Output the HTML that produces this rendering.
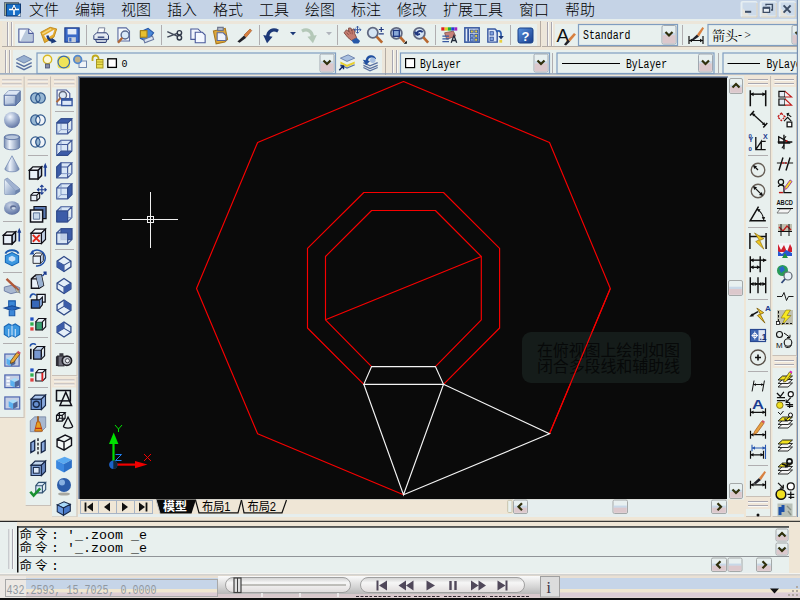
<!DOCTYPE html>
<html lang="zh"><head><meta charset="utf-8"><title>AutoCAD</title>
<style>
html,body{margin:0;padding:0;background:#efe6d6;overflow:hidden}
svg{display:block}
.cj{font-family:"Liberation Sans","Noto Sans CJK SC",sans-serif}
.mn{font-family:"Liberation Sans","Noto Sans CJK SC",sans-serif;font-weight:300}
.se{font-family:"Liberation Serif","Noto Serif CJK SC",serif}
.mo{font-family:"Liberation Mono","Noto Sans CJK SC",monospace}
.sa{font-family:"Liberation Sans","Noto Sans CJK SC",sans-serif}
</style></head><body>
<svg width="800" height="600" viewBox="0 0 800 600">
<rect x="0" y="0" width="800" height="600" fill="#efe6d6" />
<rect x="0" y="0" width="800" height="19" fill="#c5d3e6" />
<rect x="0" y="19" width="800" height="2" fill="#e6eeee" />
<text x="29" y="15" font-size="15" fill="#000" class="mn" textLength="30">文件</text>
<text x="75" y="15" font-size="15" fill="#000" class="mn" textLength="30">编辑</text>
<text x="121" y="15" font-size="15" fill="#000" class="mn" textLength="30">视图</text>
<text x="167" y="15" font-size="15" fill="#000" class="mn" textLength="30">插入</text>
<text x="213" y="15" font-size="15" fill="#000" class="mn" textLength="30">格式</text>
<text x="259" y="15" font-size="15" fill="#000" class="mn" textLength="30">工具</text>
<text x="305" y="15" font-size="15" fill="#000" class="mn" textLength="30">绘图</text>
<text x="351" y="15" font-size="15" fill="#000" class="mn" textLength="30">标注</text>
<text x="397" y="15" font-size="15" fill="#000" class="mn" textLength="30">修改</text>
<text x="443" y="15" font-size="15" fill="#000" class="mn" textLength="60">扩展工具</text>
<text x="519" y="15" font-size="15" fill="#000" class="mn" textLength="30">窗口</text>
<text x="565" y="15" font-size="15" fill="#000" class="mn" textLength="30">帮助</text>
<rect x="2" y="21" width="539" height="26" fill="#ece6da" />
<rect x="15" y="24" width="522" height="22" fill="#e8f0ee" />
<line x1="7.5" y1="22" x2="7.5" y2="46" stroke="#a8a6b0" stroke-width="1" />
<line x1="8.5" y1="22" x2="8.5" y2="46" stroke="#f8f8f4" stroke-width="1" />
<line x1="11.5" y1="22" x2="11.5" y2="46" stroke="#a8a6b0" stroke-width="1" />
<line x1="12.5" y1="22" x2="12.5" y2="46" stroke="#f8f8f4" stroke-width="1" />
<line x1="2" y1="46.5" x2="541" y2="46.5" stroke="#b4aca4" stroke-width="1" />
<line x1="540.5" y1="21" x2="540.5" y2="47" stroke="#b4aca4" stroke-width="1" />
<rect x="542" y="21" width="258" height="26" fill="#ece6da" />
<rect x="555" y="24" width="245" height="22" fill="#e8f0ee" />
<line x1="547.5" y1="22" x2="547.5" y2="46" stroke="#a8a6b0" stroke-width="1" />
<line x1="548.5" y1="22" x2="548.5" y2="46" stroke="#f8f8f4" stroke-width="1" />
<line x1="551.5" y1="22" x2="551.5" y2="46" stroke="#a8a6b0" stroke-width="1" />
<line x1="552.5" y1="22" x2="552.5" y2="46" stroke="#f8f8f4" stroke-width="1" />
<line x1="542" y1="46.5" x2="800" y2="46.5" stroke="#b4aca4" stroke-width="1" />
<rect x="0" y="49" width="385" height="25" fill="#ece6da" />
<rect x="13" y="50" width="369" height="23" fill="#e8f0ee" />
<line x1="5.5" y1="50" x2="5.5" y2="73" stroke="#a8a6b0" stroke-width="1" />
<line x1="6.5" y1="50" x2="6.5" y2="73" stroke="#f8f8f4" stroke-width="1" />
<line x1="9.5" y1="50" x2="9.5" y2="73" stroke="#a8a6b0" stroke-width="1" />
<line x1="10.5" y1="50" x2="10.5" y2="73" stroke="#f8f8f4" stroke-width="1" />
<line x1="385.5" y1="48" x2="385.5" y2="75" stroke="#b4aca4" stroke-width="1" />
<rect x="387" y="49" width="413" height="25" fill="#ece6da" />
<rect x="399" y="50" width="401" height="23" fill="#e8f0ee" />
<line x1="392.5" y1="50" x2="392.5" y2="73" stroke="#a8a6b0" stroke-width="1" />
<line x1="393.5" y1="50" x2="393.5" y2="73" stroke="#f8f8f4" stroke-width="1" />
<line x1="396.5" y1="50" x2="396.5" y2="73" stroke="#a8a6b0" stroke-width="1" />
<line x1="397.5" y1="50" x2="397.5" y2="73" stroke="#f8f8f4" stroke-width="1" />
<rect x="0" y="73.3" width="800" height="1.2" fill="#8098b8" />
<g transform="translate(17.20,26.20) scale(1.100)"><path d="M1.5 2.5 H10.5 L14.5 6.5 V14.5 H1.5 Z" fill="#f4f8fc" stroke="#4a5a9a"/><path d="M3 13.5 L8 3.5 H10.5 L13.5 7 V13.5 Z" fill="#b8c8dc"/><path d="M10.5 2.5 V6.5 H14.5" fill="#fff" stroke="#4a5a9a"/></g>
<g transform="translate(40.20,26.20) scale(1.100)"><path d="M.5 5.5 L9 1 L15 2.5 L12.5 10 L4 15 Z" fill="#e4ac30" stroke="#c08818" stroke-width=".8"/><path d="M3.5 8.5 L13 3 L11.5 7.5 L5.5 11.5Z" fill="#eef2f8"/><path d="M2 7 L10 2.5" stroke="#f4d880" stroke-width="1.2"/><path d="M6.5 8.5 Q7.5 13.5 13 13.5" fill="none" stroke="#1a3a7a" stroke-width="2.2"/><path d="M10.5 10.5 L15 14 L10 15.8Z" fill="#1a3a7a"/></g>
<g transform="translate(63.20,26.20) scale(1.100)"><rect x="1.5" y="1.5" width="13" height="13" fill="#3a6ac8" stroke="#203c88"/><rect x="4" y="2.5" width="8" height="5" fill="#e4ecf8"/><rect x="4.5" y="10" width="7" height="4.5" fill="#c8d0dc"/><rect x="5.5" y="10.5" width="2" height="3.5" fill="#3a6ac8"/></g>
<line x1="86.5" y1="25" x2="86.5" y2="45" stroke="#b0aeb0" stroke-width="1" />
<g transform="translate(92.20,26.20) scale(1.100)"><path d="M4.5 7 L6 1.5 H11.5 L10.5 7" fill="#fcfcfc" stroke="#6a7490" stroke-width=".8"/><path d="M1.5 8.5 L4 6 H13 L14.8 8.5 V12 H1.5Z" fill="#e4eaf2" stroke="#2c3c74" stroke-width=".9"/><path d="M3 12 H13.5 L12.5 14.8 H4Z" fill="#c8d0de" stroke="#2c3c74" stroke-width=".9"/><path d="M5 10 H11" stroke="#2c3c74" stroke-width="1.2"/></g>
<g transform="translate(115.20,26.20) scale(1.100)"><path d="M2.5 1.5 H10 L13 4.5 V13.5 H2.5 Z" fill="#f4f8fc" stroke="#5a6aa0"/><circle cx="9" cy="8" r="3.6" fill="#d8e8f8" stroke="#5a6a90" stroke-width="1.3"/><path d="M6.5 10.5 L2.5 15" stroke="#b06838" stroke-width="2.2"/></g>
<g transform="translate(138.20,26.20) scale(1.100)"><path d="M2 5 L9 2 L14 6 L8 14 L2 11Z" fill="#4888d8" stroke="#2858a8"/><rect x="2" y="4" width="6" height="6" fill="#e8c030" stroke="#a88018"/><path d="M5 12 L13 9 L14 12 L6 15Z" fill="#dce4f0" stroke="#6878a0"/></g>
<line x1="161.5" y1="25" x2="161.5" y2="45" stroke="#b0aeb0" stroke-width="1" />
<g transform="translate(166.20,26.20) scale(1.100)"><path d="M1 5 L10 9 M1 10 L10 6.5" stroke="#404858" stroke-width="1.3"/><circle cx="12" cy="6" r="2" fill="none" stroke="#303848" stroke-width="1.3"/><circle cx="12" cy="10.5" r="2" fill="none" stroke="#303848" stroke-width="1.3"/></g>
<g transform="translate(189.20,26.20) scale(1.100)"><path d="M1.5 2.5 H8 L10.5 5 V12 H1.5Z" fill="#f0f4fc" stroke="#4a5a9a"/><path d="M5.5 5.5 H12 L14.5 8 V15 H5.5Z" fill="#f4f8ff" stroke="#4a5a9a"/></g>
<g transform="translate(212.20,26.20) scale(1.100)"><path d="M2 3 H13 V13 L10 15 H2Z" fill="#e0a838" stroke="#a87820" transform="rotate(-12 8 8)"/><path d="M4.5 6 H10 L12.5 8.5 V13 H4.5Z" fill="#eef2fa" stroke="#5a6aa0"/><rect x="5" y="1" width="5" height="3" fill="#b0b8c8" stroke="#687088"/></g>
<g transform="translate(235.20,26.20) scale(1.100)"><path d="M2 14 L8 8.5 L10 10.5 L4 15Z" fill="#202028"/><path d="M8 8 L13.5 2.5 L15 4 L10 10Z" fill="#d88040" stroke="#a05828" stroke-width=".6"/></g>
<line x1="259.5" y1="25" x2="259.5" y2="45" stroke="#b0aeb0" stroke-width="1" />
<g transform="translate(263.20,26.20) scale(1.100)"><path d="M4 10.5 C4 4 9 2 13.5 4.5" fill="none" stroke="#1c3878" stroke-width="3"/><path d="M0 8 L8.5 9.5 L3.5 15.5Z" fill="#1c3878"/></g>
<path d="M290 32 L296 32 L293 35.2Z" fill="#1c3878" stroke="none" stroke-width="1" />
<g transform="translate(299.20,26.20) scale(1.100)"><path d="M12 10.5 C12 4 7 2 2.5 4.5" fill="none" stroke="#b4c8b8" stroke-width="3"/><path d="M16 8 L7.5 9.5 L12.5 15.5Z" fill="#b4c8b8"/></g>
<path d="M326 32 L332 32 L329 35.2Z" fill="#b0b4bc" stroke="none" stroke-width="1" />
<line x1="337.5" y1="25" x2="337.5" y2="45" stroke="#b0aeb0" stroke-width="1" />
<g transform="translate(343.20,26.20) scale(1.100)"><path d="M.8 6 L3 3.2 L4.8 5 L5 1.6 L7.2 1.8 L7.8 4.4 L9 2.4 L10.8 3.4 L10.4 6.6 L12.2 10.4 L7.6 13 L4.2 10.2 Z" fill="#c47c70" stroke="#7a443c" stroke-width=".8"/><path d="M3.2 5.8 L5 8 M5.6 4 L6.6 7 M8.2 4.6 L8.2 7.4" stroke="#8a4c44" stroke-width=".7"/><path d="M7.6 13 L12.2 10.4 L15.4 13.4 L13.8 15.8 H9.6Z" fill="#2858a8"/><path d="M13 0 V6.4 M9.8 3.2 H16.2 M11.8 1.2 L13 0 L14.2 1.2 M11.8 5.2 L13 6.4 L14.2 5.2 M11 2 L9.8 3.2 L11 4.4 M15 2 L16.2 3.2 L15 4.4" fill="none" stroke="#3858a0" stroke-width=".9"/></g>
<g transform="translate(366.20,26.20) scale(1.100)"><circle cx="6" cy="6" r="4.6" fill="#d4e4f4" stroke="#606880" stroke-width="1.6"/><path d="M9.5 9.5 L14.5 15" stroke="#b86830" stroke-width="2.4"/><path d="M11.5 3 H16 M13.7 .8 V5.2 M11.5 7 H16" stroke="#203880" stroke-width="1.1"/></g>
<g transform="translate(389.20,26.20) scale(1.100)"><circle cx="6.5" cy="6.5" r="5" fill="#d4e4f4" stroke="#606880" stroke-width="1.6"/><rect x="3.8" y="3.8" width="5.4" height="5.4" fill="#88a8d8" stroke="#203880" stroke-width="1.2"/><path d="M10 10 L14 14.5" stroke="#b86830" stroke-width="2.4"/><path d="M16 13.2 V16 H13.2Z" fill="#000"/></g>
<g transform="translate(412.20,26.20) scale(1.100)"><circle cx="6.5" cy="6.5" r="5" fill="#d4e4f4" stroke="#606880" stroke-width="1.6"/><path d="M4 8 C4 4 8 3.5 9.5 5.5 M4 8 L2.5 5 M4 8 L7 7" fill="none" stroke="#203880" stroke-width="1.8"/><path d="M10 10 L14.5 15" stroke="#b86830" stroke-width="2.4"/></g>
<line x1="435.5" y1="25" x2="435.5" y2="45" stroke="#b0aeb0" stroke-width="1" />
<g transform="translate(440.20,26.20) scale(1.100)"><rect x="1" y="1" width="3" height="3" fill="#e02020"/><rect x="4" y="1" width="3" height="3" fill="#e0d020"/><rect x="7" y="1" width="3" height="3" fill="#20b030"/><rect x="10" y="1" width="3" height="3" fill="#2040d0"/><rect x="13" y="1" width="2.5" height="3" fill="#a020c0"/><path d="M4 6 L12 4.5 L14 9 L6 12Z" fill="#c88078" stroke="#805048" stroke-width=".7"/><path d="M2 9 H8 M2 11.5 H8 M2 14 H8" stroke="#3858a0" stroke-width="1.3"/><path d="M10 15 L12.5 8.5 L15 15 M11 13 H14" fill="none" stroke="#202838" stroke-width="1.2"/></g>
<g transform="translate(463.20,26.20) scale(1.100)"><rect x="1.5" y="1.5" width="13" height="13" fill="#e4ecf8" stroke="#3858a0" stroke-width="1.4"/><path d="M4.5 2 V14" stroke="#3858a0" stroke-width="1.6"/><rect x="6.5" y="3.5" width="2.6" height="2.6" fill="#e8d040" stroke="#3858a0" stroke-width=".8"/><rect x="10.5" y="3.5" width="2.6" height="2.6" fill="#e8d040" stroke="#3858a0" stroke-width=".8"/><rect x="6.5" y="7.5" width="2.6" height="2.6" fill="#88a8e0" stroke="#3858a0" stroke-width=".8"/><rect x="10.5" y="7.5" width="2.6" height="2.6" fill="#e8d040" stroke="#3858a0" stroke-width=".8"/><rect x="6.5" y="11" width="2.6" height="2.6" fill="#88a8e0" stroke="#3858a0" stroke-width=".8"/><rect x="10.5" y="11" width="2.6" height="2.6" fill="#e8d040" stroke="#3858a0" stroke-width=".8"/></g>
<g transform="translate(486.20,26.20) scale(1.100)"><path d="M1.5 2.5 H8 L10 4.5 V14.5 H1.5Z" fill="#dce6f6" stroke="#3858a0" stroke-width="1.3"/><rect x="3.5" y="5" width="3" height="3" fill="#88a8e0" stroke="#3858a0" stroke-width=".8"/><rect x="3.5" y="10" width="3" height="3" fill="#88a8e0" stroke="#3858a0" stroke-width=".8"/><path d="M9 5 C13 3 14 6 13.5 9" fill="none" stroke="#3060b0" stroke-width="1.6"/><path d="M11 9 H16 L13.5 12Z" fill="#1c3878"/><rect x="12" y="12.5" width="2.5" height="2.5" fill="#e8d040"/></g>
<line x1="510.5" y1="25" x2="510.5" y2="45" stroke="#b0aeb0" stroke-width="1" />
<defs><linearGradient id="hg" x1="0" y1="0" x2="1" y2="1"><stop offset="0" stop-color="#5c94e0"/><stop offset="1" stop-color="#163c8c"/></linearGradient></defs><rect x="518" y="28" width="15" height="15" rx="2" fill="url(#hg)" stroke="#184088"/>
<text x="521.5" y="40.5" font-size="13" fill="#fff" class="sa" font-weight="bold">?</text>
<text x="556.5" y="42" font-size="19" fill="#101010" class="sa" >A</text>
<path d="M564 44.5 L568 39.5 L570 41.5 L566 45.5Z" fill="#202028" stroke="none" stroke-width="1" />
<path d="M568 39.5 L574 33 L576 34.5 L570 41.5Z" fill="#d88040" stroke="none" stroke-width="1" />
<rect x="578.5" y="24.5" width="99" height="21" fill="#e8f0ee" stroke="#7f9dc0" stroke-width="1.2"/>
<rect x="662" y="25.5" width="14" height="18.5" rx="1.5" fill="#e8f0f0" stroke="#a0a8b0" stroke-width="1"/>
<rect x="662.7" y="32.9" width="12.6" height="2.5900000000000003" fill="#c8d8e8" />
<rect x="662.7" y="35.120000000000005" width="12.6" height="8.18" fill="#dcc8cc" />
<path d="M665.5 32.0 L669 35.5 L672.5 32.0" fill="none" stroke="#30300c" stroke-width="2.2" />
<text x="583" y="39" font-size="12.5" fill="#000" class="mo" textLength="47.5" lengthAdjust="spacingAndGlyphs">Standard</text>
<line x1="682.5" y1="25" x2="682.5" y2="45" stroke="#b0aeb0" stroke-width="1" />
<path d="M689 36 V44 M703 36 V44 M689 40.5 H703" fill="none" stroke="#101010" stroke-width="1.2" />
<path d="M689 40.5 L692 38.8 V42.2Z M703 40.5 L700 38.8 V42.2Z" fill="#101010" stroke="none" stroke-width="1" />
<path d="M691 40 L697 34.5 L699 36.5 L694 40Z" fill="#202028" stroke="none" stroke-width="1" />
<path d="M697 34.5 L702.5 27 L704 28.2 L699 36.5Z" fill="#d88040" stroke="none" stroke-width="1" />
<rect x="708.0" y="24.5" width="99" height="21" fill="#e8f0ee" stroke="#7f9dc0" stroke-width="1.2"/>
<rect x="792" y="25.5" width="14" height="18.5" rx="1.5" fill="#e8f0f0" stroke="#a0a8b0" stroke-width="1"/>
<rect x="792.7" y="32.9" width="12.6" height="2.5900000000000003" fill="#c8d8e8" />
<rect x="792.7" y="35.120000000000005" width="12.6" height="8.18" fill="#dcc8cc" />
<path d="M795.5 32.0 L799 35.5 L802.5 32.0" fill="none" stroke="#30300c" stroke-width="2.2" />
<text x="712" y="40" font-size="13" fill="#000" class="se" >箭头</text>
<text x="738" y="39" font-size="12" fill="#000" class="se" textLength="13">-&gt;</text>
<g transform="translate(15.20,53.20) scale(1.100)"><path d="M1 5.5 L8 2 L15 5.5 L8 9Z" fill="#98b0d0" stroke="#5870a0" stroke-width=".7"/><path d="M1 8.5 L8 12 L15 8.5 M1 11.5 L8 15 L15 11.5" fill="none" stroke="#5870a0" stroke-width="1.3"/></g>
<rect x="37.0" y="53.0" width="298.5" height="20.5" fill="#e8f0ee" stroke="#7f9dc0" stroke-width="1.2"/>
<rect x="320.0" y="54.0" width="14" height="18.0" rx="1.5" fill="#e8f0f0" stroke="#a0a8b0" stroke-width="1"/>
<rect x="320.7" y="61.2" width="12.6" height="2.5200000000000005" fill="#c8d8e8" />
<rect x="320.7" y="63.36" width="12.6" height="7.94" fill="#dcc8cc" />
<path d="M323.5 60.5 L327.0 64.0 L330.5 60.5" fill="none" stroke="#30300c" stroke-width="2.2" />
<circle cx="47.5" cy="59.5" r="4.2" fill="#fcf8d8" stroke="#d8b820" stroke-width="1.4"/>
<rect x="45.5" y="64" width="4" height="4" fill="#8890a8" stroke="#485070" stroke-width=".8"/>
<rect x="57.5" y="56" width="12.5" height="12.5" fill="#f0e050" rx="3"/>
<circle cx="63.8" cy="62" r="5.8" fill="#f0e458" stroke="#3868b0" stroke-width="1.2"/>
<rect x="79" y="61" width="7.5" height="6.5" fill="#f0f4f8" stroke="#7088b0" stroke-width="1"/>
<circle cx="77.7" cy="59.5" r="3.8" fill="#c0b088" stroke="#5088d0" stroke-width="1.8"/>
<path d="M92.5 61 V58.5 A3 3 0 0 1 98.5 58.5 V60" fill="none" stroke="#c0a818" stroke-width="1.8" />
<rect x="96.5" y="59.5" width="6.5" height="8.5" fill="#e8dc50" stroke="#a09018" stroke-width=".9"/>
<path d="M97 62 H103 M97 64.5 H103" fill="none" stroke="#a09018" stroke-width="0.7" />
<rect x="107.8" y="58.8" width="8.6" height="8.6" fill="#fff" stroke="#000" stroke-width="1.3"/>
<text x="121.5" y="67" font-size="10" fill="#000" class="mo" >0</text>
<g transform="translate(338.20,53.20) scale(1.100)"><path d="M2 4.5 L9 1.5 L15 4.5 L8 7.5Z" fill="#a8c0e0" stroke="#5870a0" stroke-width=".7"/><path d="M2 7.5 L8 10.5 L15 7.5 L15 9.5 L8 12.5 L2 9.5Z" fill="#e8d030"/><path d="M2 10.5 L8 13.5 L15 10.5" fill="none" stroke="#5870a0" stroke-width="1.2"/><path d="M1 15.5 L4.5 11.5 M2 11.5 H4.8 V14.5" fill="none" stroke="#102868" stroke-width="1.3"/></g>
<g transform="translate(361.20,53.20) scale(1.100)"><path d="M2 8.5 L8 11.5 L15 8.5 M2 11 L8 14 L15 11 M2 13 L8 16 L15 13" fill="none" stroke="#5870a0" stroke-width="1.2"/><path d="M5 8 C5 2 11 1.5 12.5 5.5" fill="none" stroke="#2050a0" stroke-width="2.2"/><path d="M1.5 6 L8 7 L4.5 11Z" fill="#2050a0"/><circle cx="10.5" cy="6.5" r="2.5" fill="#a8c0e0"/></g>
<rect x="400.5" y="53.0" width="149" height="20.5" fill="#e8f0ee" stroke="#7f9dc0" stroke-width="1.2"/>
<rect x="534" y="54.0" width="14" height="18.0" rx="1.5" fill="#e8f0f0" stroke="#a0a8b0" stroke-width="1"/>
<rect x="534.7" y="61.2" width="12.6" height="2.5200000000000005" fill="#c8d8e8" />
<rect x="534.7" y="63.36" width="12.6" height="7.94" fill="#dcc8cc" />
<path d="M537.5 60.5 L541 64.0 L544.5 60.5" fill="none" stroke="#30300c" stroke-width="2.2" />
<rect x="405.6" y="58.6" width="9" height="9" fill="#fff" stroke="#000" stroke-width="1.2"/>
<text x="420" y="67.5" font-size="12.5" fill="#000" class="mo" textLength="41" lengthAdjust="spacingAndGlyphs">ByLayer</text>
<line x1="552.5" y1="53" x2="552.5" y2="73" stroke="#b0aeb0" stroke-width="1" />
<rect x="557.0" y="53.0" width="157" height="20.5" fill="#e8f0ee" stroke="#7f9dc0" stroke-width="1.2"/>
<rect x="698.5" y="54.0" width="14" height="18.0" rx="1.5" fill="#e8f0f0" stroke="#a0a8b0" stroke-width="1"/>
<rect x="699.2" y="61.2" width="12.6" height="2.5200000000000005" fill="#c8d8e8" />
<rect x="699.2" y="63.36" width="12.6" height="7.94" fill="#dcc8cc" />
<path d="M702.0 60.5 L705.5 64.0 L709.0 60.5" fill="none" stroke="#30300c" stroke-width="2.2" />
<line x1="562" y1="63.5" x2="620" y2="63.5" stroke="#000" stroke-width="1.2" />
<text x="626" y="67.5" font-size="12.5" fill="#000" class="mo" textLength="41" lengthAdjust="spacingAndGlyphs">ByLayer</text>
<line x1="718.5" y1="53" x2="718.5" y2="73" stroke="#b0aeb0" stroke-width="1" />
<rect x="723.0" y="53.0" width="99" height="20.5" fill="#e8f0ee" stroke="#7f9dc0" stroke-width="1.2"/>
<line x1="727.5" y1="63.5" x2="760" y2="63.5" stroke="#000" stroke-width="1.2" />
<text x="766.5" y="67.5" font-size="12.5" fill="#000" class="mo" textLength="41" lengthAdjust="spacingAndGlyphs">ByLayer</text>
<rect x="4.5" y="2.5" width="14" height="13" fill="#98a890" stroke="#607080" stroke-width="1"/>
<rect x="6.5" y="4" width="14" height="12" fill="#1870c8" stroke="#103870" stroke-width="1"/>
<path d="M9 9.5 H19 M14 5 V15" fill="none" stroke="#fff" stroke-width="1.6" />
<circle cx="14" cy="8.5" r="2" fill="#fff"/><circle cx="14" cy="8.5" r=".9" fill="#102040"/>
<path d="M17.5 16 L20.5 13 V16Z" fill="#f4f0e0" stroke="none" stroke-width="1" />
<rect x="740.5" y="1" width="17" height="16.5" rx="2" fill="#e6eef2"/>
<rect x="742.5" y="2.5" width="14" height="13" fill="#ccdaea"/>
<path d="M741.5 17 H757.0 V3" fill="none" stroke="#d8cdb8" stroke-width="1"/>
<path d="M742.5 15.5 L742.5 8 L749.5 15.5Z" fill="#eee6d8" opacity=".8"/>
<rect x="759.7" y="1" width="17" height="16.5" rx="2" fill="#e6eef2"/>
<rect x="761.7" y="2.5" width="14" height="13" fill="#ccdaea"/>
<path d="M760.7 17 H776.2 V3" fill="none" stroke="#d8cdb8" stroke-width="1"/>
<path d="M761.7 15.5 L761.7 8 L768.7 15.5Z" fill="#eee6d8" opacity=".8"/>
<rect x="778.7" y="1" width="17" height="16.5" rx="2" fill="#e6eef2"/>
<rect x="780.7" y="2.5" width="14" height="13" fill="#ccdaea"/>
<path d="M779.7 17 H795.2 V3" fill="none" stroke="#d8cdb8" stroke-width="1"/>
<path d="M780.7 15.5 L780.7 8 L787.7 15.5Z" fill="#eee6d8" opacity=".8"/>
<rect x="745" y="10.8" width="6.2" height="2" fill="#3c4c64" />
<path d="M763.2 8 H769.6 V12.4 H763.2Z" fill="#e8eef4" stroke="#3c4c64" stroke-width="1.3" />
<path d="M763 7.6 H770" fill="none" stroke="#3c4c64" stroke-width="1.8" />
<path d="M766 5.5 V4.4 H772.4 V10 H771" fill="none" stroke="#3c4c64" stroke-width="1.4" />
<path d="M783.6 5.4 L790.6 12.6 M790.6 5.4 L783.6 12.6" fill="none" stroke="#3c4c64" stroke-width="2" />
<rect x="796.8" y="0" width="1.2" height="520" fill="#7890b0" />
<rect x="798" y="0" width="2" height="600" fill="#e6eeee" />
<rect x="796.8" y="520" width="1.2" height="80" fill="#eef4f0" />
<rect x="78" y="76" width="666" height="440" fill="#e4ecec" />
<rect x="78" y="76" width="650" height="2" fill="#8898b0" />
<rect x="78" y="76" width="2" height="423" fill="#8898b0" />
<rect x="79" y="77" width="1" height="422" fill="#485468" />
<rect x="79" y="77" width="648" height="1" fill="#485468" />
<rect x="80" y="78" width="647" height="421.2" fill="#0a0a0a" />
<g>
<polyline points="403.5,494.8 257.6,433.8 196.5,288.5 257.6,142.5 403.5,81.5 549.5,142.5 610.3,288.5 549.5,433.8" fill="none" stroke="#f80000" stroke-width="1.15" stroke-linejoin="round"/>
<polyline points="363.8,384.3 307.5,328 307.5,248.3 363.8,192.5 443.5,192.5 499.6,248.3 499.6,328 443.5,384.3" fill="none" stroke="#f80000" stroke-width="1.15" stroke-linejoin="round"/>
<polyline points="371.6,366.6 325.5,319.8 325.5,256.5 371.6,210.5 435.4,210.5 481.3,256.5 481.3,319.8 435.4,366.6" fill="none" stroke="#f80000" stroke-width="1.15" stroke-linejoin="round"/>
<line x1="325.5" y1="319.8" x2="481.3" y2="256.5" stroke="#f80000" stroke-width="1.15" />
</g>
<rect x="522" y="332" width="169" height="51" rx="9" ry="9" fill="#151c1a"/>
<text x="537" y="356" font-size="16" fill="#070909" class="cj" textLength="143">在俯视图上绘制如图</text>
<text x="537" y="372" font-size="16" fill="#070909" class="cj" textLength="143">闭合多段线和辅助线</text>
<g>
<line x1="549.5" y1="433.8" x2="610.3" y2="288.5" stroke="#f80000" stroke-width="1.15" />
<polygon points="371.6,366.6 435.4,366.6 443.5,384.3 363.8,384.3" fill="none" stroke="#f4f4f4" stroke-width="1.15"/>
<polyline points="363.8,384.3 403.5,494.8 443.5,384.3 549.5,433.8 403.5,494.8" fill="none" stroke="#f4f4f4" stroke-width="1.15"/>
</g>
<line x1="122" y1="219.5" x2="178" y2="219.5" stroke="#f0f0f0" stroke-width="1" />
<line x1="150.5" y1="192" x2="150.5" y2="248" stroke="#f0f0f0" stroke-width="1" />
<rect x="147.5" y="216.5" width="6" height="6" fill="none" stroke="#f0f0f0" stroke-width="1"/>
<line x1="113.5" y1="464" x2="113.5" y2="443" stroke="#00e000" stroke-width="2.2" />
<path d="M109 444 L113.7 432.5 L118.4 444 Z" fill="#00e000" stroke="none" stroke-width="1" />
<line x1="116" y1="464.6" x2="136" y2="464.6" stroke="#f00000" stroke-width="2.2" />
<path d="M135 461 L147.5 464.6 L135 468.2 Z" fill="#f00000" stroke="none" stroke-width="1" />
<circle cx="113.3" cy="464.8" r="4.2" fill="#1c62c8"/>
<path d="M113.3 460.6 A4.2 4.2 0 0 1 113.3 469 Z" fill="#10283c" stroke="none" stroke-width="1" />
<path d="M115 425 L118.5 429 L122 425 M118.5 429 L118.5 432" fill="none" stroke="#00e000" stroke-width="1" />
<path d="M144 454 L151 461 M151 454 L144 461" fill="none" stroke="#f00000" stroke-width="1" />
<path d="M115.5 454.5 L121.5 454.5 L115.5 460.5 L121.5 460.5" fill="none" stroke="#2080f0" stroke-width="1" />
<rect x="0" y="76.5" width="23.6" height="340.5" fill="#e8f0ee" />
<rect x="0" y="76.5" width="23.6" height="11" fill="#f0e6d8" />
<line x1="2" y1="80.0" x2="21.6" y2="80.0" stroke="#a8a6b0" stroke-width="1" />
<line x1="2" y1="81.0" x2="21.6" y2="81.0" stroke="#f8f8f4" stroke-width="1" />
<line x1="2" y1="84.0" x2="21.6" y2="84.0" stroke="#a8a6b0" stroke-width="1" />
<line x1="2" y1="85.0" x2="21.6" y2="85.0" stroke="#f8f8f4" stroke-width="1" />
<line x1="24.1" y1="76.5" x2="24.1" y2="417" stroke="#c8c0b8" stroke-width="1" />
<line x1="0" y1="417.5" x2="24.6" y2="417.5" stroke="#c8c0b8" stroke-width="1" />
<defs><linearGradient id="gh" x1="0" y1="0" x2="1" y2="0"><stop offset="0" stop-color="#7c90b4"/><stop offset=".35" stop-color="#eef4fc"/><stop offset="1" stop-color="#6c82aa"/></linearGradient><radialGradient id="gs" cx=".38" cy=".3" r=".75"><stop offset="0" stop-color="#f4f8ff"/><stop offset=".45" stop-color="#a8b8d4"/><stop offset="1" stop-color="#5c70a0"/></radialGradient><linearGradient id="gd" x1="0" y1="0" x2="1" y2="1"><stop offset="0" stop-color="#f0f6fc"/><stop offset="1" stop-color="#7c94bc"/></linearGradient></defs>
<g transform="translate(3.20,89.20) scale(1.100)"><path d="M1 5.5 L5 1.5 H15.5 V10.5 L11.5 14.5 H1Z" fill="#7088b0" stroke="#50689c" stroke-width=".8"/><path d="M1 5.5 L5 1.5 H15.5 L11.5 5.5Z" fill="#dce6f4"/><path d="M1 5.5 H11.5 V14.5 H1Z" fill="url(#gd)" stroke="#50689c" stroke-width=".8"/><path d="M3 7.5 H9.5 V12.5 H3Z" fill="#c4d2e6" opacity=".7"/></g>
<circle cx="12" cy="120" r="8" fill="url(#gs)"/>
<g transform="translate(3.20,133.20) scale(1.100)"><path d="M1 3.5 V12.5 A7 2.6 0 0 0 15 12.5 V3.5Z" fill="url(#gh)" stroke="#5870a0" stroke-width=".7"/><ellipse cx="8" cy="3.5" rx="7" ry="2.4" fill="#8498bc" stroke="#5870a0" stroke-width=".7"/><ellipse cx="8" cy="3.7" rx="5.6" ry="1.6" fill="#b8c6dc"/></g>
<g transform="translate(3.20,155.20) scale(1.100)"><path d="M8 .5 L1.5 12.5 A6.5 2.6 0 0 0 14.5 12.5Z" fill="url(#gh)" stroke="#6078a8" stroke-width=".6"/></g>
<g transform="translate(3.20,177.20) scale(1.100)"><path d="M1.5 2 L4 1 L15 10.5 V13 L11 15.5 H1.5Z" fill="#6c84ac" stroke="#5870a0" stroke-width=".6"/><path d="M1.5 2 L11 12 V15.5 H1.5Z" fill="url(#gd)"/><path d="M1.5 2 L4 1 L15 10.5 L11 12Z" fill="#a0b2d0"/></g>
<ellipse cx="12" cy="208" rx="8" ry="6.8" fill="url(#gs)"/><ellipse cx="12" cy="208" rx="8" ry="6.8" fill="#4c6496" opacity=".25"/><ellipse cx="13.2" cy="207.5" rx="3" ry="2.2" fill="#5c6c94"/><ellipse cx="13.6" cy="208.3" rx="2.2" ry="1.4" fill="#c8d4e4"/>
<line x1="3" y1="221.5" x2="22" y2="221.5" stroke="#b0aeb0" stroke-width="1" />
<g transform="translate(3.20,227.20) scale(1.100)"><g transform="translate(-1.5,2.5) scale(.88)" stroke-width="1.4"><path d="M2 5.5 H11 V14.5 H2Z" fill="#e8f0f8" stroke="#101018"/><path d="M2 5.5 L5.5 2 H14.5 L11 5.5Z" fill="#f4f8fc" stroke="#101018"/><path d="M11 5.5 L14.5 2 V11 L11 14.5Z" fill="#c0d0e4" stroke="#101018"/></g><path d="M14.6 3 V13" stroke="#1c3c90" stroke-width="1.5"/><path d="M12.8 5 L14.6 .5 L16.4 5Z" fill="#1c3c90"/></g>
<g transform="translate(3.20,249.20) scale(1.100)"><path d="M2 6 L8 3 L14 6 V12 L8 15 L2 12Z" fill="#3c98e0" stroke="#1868b8"/><path d="M5 7.5 L8 6 L11 7.5 V10 L8 11.5 L5 10Z" fill="#c8e0f8"/><path d="M2 4 C4 0 12 0 14 4" fill="none" stroke="#1c5cb0" stroke-width="1.8"/></g>
<line x1="3" y1="272.5" x2="22" y2="272.5" stroke="#b0aeb0" stroke-width="1" />
<g transform="translate(3.20,277.20) scale(1.100)"><path d="M1 9 L9 7 L15 9.5 V13 L7 15 L1 12.5Z" fill="#a8b8d0" stroke="#6878a0" stroke-width=".8"/><path d="M3 1.5 L14 12" stroke="#b05838" stroke-width="2.2"/><path d="M11 9.5 L15.5 14.5 L12 13Z" fill="#e8e8d0" stroke="#707060" stroke-width=".6"/></g>
<g transform="translate(3.20,299.20) scale(1.100)"><path d="M5 1.5 H11 V8 H5Z" fill="#3c88d8" stroke="#1858a8"/><path d="M1 8 L8 6 L15 8 L8 10.5Z" fill="#2868c0" stroke="#184890"/><path d="M5.5 10 V15 H10.5 V10" fill="#3c88d8" stroke="#1858a8"/></g>
<g transform="translate(3.20,321.20) scale(1.100)"><path d="M1 5 L5 2.5 L8 4 L11 2.5 L15 5 V12 L11 14.5 L8 13 L5 14.5 L1 12Z" fill="#3c98e0" stroke="#1868b8"/><path d="M5 7 V14 M8 4 V13 M11 7 V14" stroke="#c8e0f8" stroke-width="1"/></g>
<line x1="3" y1="343.5" x2="22" y2="343.5" stroke="#b0aeb0" stroke-width="1" />
<g transform="translate(3.20,350.20) scale(1.100)"><rect x="1.5" y="3.5" width="13" height="11" fill="#c4cee4" stroke="#5068b0" stroke-width="1.1"/><path d="M3 7.5 l4 -2 l4 2 l-4 2Z" fill="#a8dcf8"/><path d="M3 7.5 l4 2 v5 l-4 -2Z" fill="#58b0f0"/><path d="M11 7.5 l-4 2 v5 l4 -2Z" fill="#506898"/><path d="M7 9.5 L12.5 2 L15 3.8 L9.5 11 L6.5 12Z" fill="#e8a838" stroke="#604010" stroke-width=".7"/><path d="M12.5 2 L13.5 .6 L16 2.4 L15 3.8Z" fill="#d05060"/></g>
<g transform="translate(3.20,372.20) scale(1.100)"><rect x="1.5" y="2.5" width="13.5" height="11.5" fill="#c4cee4" stroke="#5068b0" stroke-width="1.1"/><path d="M3 5 H6 M3 8 H6 M3 11 H6" stroke="#f4f8fc" stroke-width="1.6"/><path d="M6.5 7 l4 -2 l4 2 l-4 2Z" fill="#a8dcf8"/><path d="M6.5 7 l4 2 v5 l-4 -2Z" fill="#58b0f0"/><path d="M14.5 7 l-4 2 v5 l4 -2Z" fill="#506898"/></g>
<g transform="translate(3.20,394.20) scale(1.100)"><rect x="1.5" y="2.5" width="13.5" height="11" fill="#c4cee4" stroke="#5068b0" stroke-width="1.1"/><path d="M5 6.5 l4 -2 l4 2 l-4 2Z" fill="#a8dcf8"/><path d="M5 6.5 l4 2 v5 l-4 -2Z" fill="#58b0f0"/><path d="M13 6.5 l-4 2 v5 l4 -2Z" fill="#506898"/></g>
<rect x="25.7" y="76.5" width="24.3" height="428.5" fill="#e8f0ee" />
<rect x="25.7" y="76.5" width="24.3" height="11" fill="#f0e6d8" />
<line x1="27.7" y1="80.0" x2="48.0" y2="80.0" stroke="#a8a6b0" stroke-width="1" />
<line x1="27.7" y1="81.0" x2="48.0" y2="81.0" stroke="#f8f8f4" stroke-width="1" />
<line x1="27.7" y1="84.0" x2="48.0" y2="84.0" stroke="#a8a6b0" stroke-width="1" />
<line x1="27.7" y1="85.0" x2="48.0" y2="85.0" stroke="#f8f8f4" stroke-width="1" />
<line x1="50.5" y1="76.5" x2="50.5" y2="505" stroke="#c8c0b8" stroke-width="1" />
<line x1="25.7" y1="505.5" x2="51.0" y2="505.5" stroke="#c8c0b8" stroke-width="1" />
<g transform="translate(29.82,89.82) scale(1.023)"><ellipse cx="5.5" cy="8" rx="4.6" ry="5" fill="#98b8d4" stroke="#30588c" stroke-width="1.2"/><ellipse cx="10.5" cy="8" rx="4.6" ry="5" fill="#98b8d4" stroke="#30588c" stroke-width="1.2"/><path d="M8 3.8 A4.6 5 0 0 1 8 12.2 A4.6 5 0 0 1 8 3.8Z" fill="#98b8d4" stroke="#30588c" stroke-width="1"/></g>
<g transform="translate(29.82,111.82) scale(1.023)"><ellipse cx="5.5" cy="8" rx="4.6" ry="5" fill="#98b8d4" stroke="#30588c" stroke-width="1.2"/><ellipse cx="10.5" cy="8" rx="4.6" ry="5" fill="#f0f4f8" stroke="#30588c" stroke-width="1.2"/><path d="M8 3.8 A4.6 5 0 0 1 8 12.2 A4.6 5 0 0 1 8 3.8Z" fill="#f0f4f8" stroke="#30588c" stroke-width="1"/></g>
<g transform="translate(29.82,133.82) scale(1.023)"><ellipse cx="5.5" cy="8" rx="4.6" ry="5" fill="#f0f4f8" stroke="#30588c" stroke-width="1.2"/><ellipse cx="10.5" cy="8" rx="4.6" ry="5" fill="#f0f4f8" stroke="#30588c" stroke-width="1.2"/><path d="M8 3.8 A4.6 5 0 0 1 8 12.2 A4.6 5 0 0 1 8 3.8Z" fill="#98b8d4" stroke="#30588c" stroke-width="1"/></g>
<line x1="28" y1="155.5" x2="48" y2="155.5" stroke="#b0aeb0" stroke-width="1" />
<g transform="translate(29.20,162.20) scale(1.100)"><g transform="translate(-1.5,2.5) scale(.88)" stroke-width="1.4"><path d="M2 5.5 H11 V14.5 H2Z" fill="#e8f0f8" stroke="#101018"/><path d="M2 5.5 L5.5 2 H14.5 L11 5.5Z" fill="#f4f8fc" stroke="#101018"/><path d="M11 5.5 L14.5 2 V11 L11 14.5Z" fill="#c0d0e4" stroke="#101018"/></g><path d="M14.6 3 V13" stroke="#1c3c90" stroke-width="1.5"/><path d="M12.8 5 L14.6 .5 L16.4 5Z" fill="#1c3c90"/></g>
<g transform="translate(29.20,184.20) scale(1.100)"><path d="M1.5 10 H7 V15 H1.5Z M1.5 10 L4 7.5 H9.5 L7 10 M9.5 7.5 V12.5 L7 15" fill="#e8f0f8" stroke="#101018"/><path d="M11.5 1 V9 M7.5 5 H15.5 M10 2.5 L11.5 1 L13 2.5 M10 7.5 L11.5 9 L13 7.5 M9 3.5 L7.5 5 L9 6.5 M14 3.5 L15.5 5 L14 6.5" fill="none" stroke="#1c3c90" stroke-width="1"/></g>
<g transform="translate(28.76,204.76) scale(1.155)"><path d="M4.5 1.5 H15 V12 H4.5Z" fill="#5878b0" stroke="#101018"/><path d="M1.5 4.5 H12 V15 H1.5Z" fill="#f4f8fc" stroke="#101018" stroke-width="1.3"/><path d="M4 7 H9.5 V12.5 H4Z" fill="#c8d8ec" stroke="#506890" stroke-width=".8"/></g>
<g transform="translate(28.76,226.76) scale(1.155)"><path d="M2 5.5 H11 V14.5 H2Z" fill="#e8f0f8" stroke="#101018"/><path d="M2 5.5 L5.5 2 H14.5 L11 5.5Z" fill="#f4f8fc" stroke="#101018"/><path d="M11 5.5 L14.5 2 V11 L11 14.5Z" fill="#c0d0e4" stroke="#101018"/><path d="M3.5 7 L9.5 13 M9.5 7 L3.5 13" stroke="#e02818" stroke-width="1.6"/></g>
<g transform="translate(31.40,251.40) scale(0.825)"><path d="M2 5.5 H11 V14.5 H2Z" fill="#e8f0f8" stroke="#101018"/><path d="M2 5.5 L5.5 2 H14.5 L11 5.5Z" fill="#f4f8fc" stroke="#101018"/><path d="M11 5.5 L14.5 2 V11 L11 14.5Z" fill="#c0d0e4" stroke="#101018"/></g>
<path d="M32 252 A8 8 0 1 1 36 266" fill="none" stroke="#2050a8" stroke-width="1.5"/><path d="M29.5 254.5 L32.5 250 L34.5 254.5Z" fill="#2050a8"/>
<g transform="translate(29.20,271.20) scale(1.100)"><path d="M2 7 L6 3.5 H11 L13 13 L9 15.5 H2Z" fill="#e8f0f8" stroke="#101018" stroke-width="1.3"/><path d="M6 3.5 L9 15.5 M2 7 H6.8" stroke="#101018" stroke-width="1"/><path d="M6 4 L11 3.5 L13 13 L9 15Z" fill="#98b0d0"/><path d="M12 4.5 L15 1 M13 1 H15.2 V3.4" fill="none" stroke="#1c3c90" stroke-width="1.3"/></g>
<g transform="translate(29.20,292.20) scale(1.100)"><path d="M7 2 H14.5 V9 H7Z" fill="#e8f0f8" stroke="#101018" stroke-width="1.2"/><path d="M2 7 H9.5 V14.5 H2Z" fill="#3868b8" stroke="#101018" stroke-width="1.2"/><path d="M9.5 7 L12 4.5 V11.5 L9.5 14.5" fill="#88a8d8" stroke="#101018"/><path d="M1 5 C1 1 5 1 6 3" fill="none" stroke="#2050a8" stroke-width="1.4"/></g>
<g transform="translate(29.20,315.20) scale(1.100)"><rect x="1" y="2" width="3" height="3" fill="#2050c0"/><rect x="1" y="6.5" width="3" height="3" fill="#30b050"/><rect x="1" y="11" width="3" height="3" fill="#e04040"/><path d="M6 6 H12 V13.5 H6Z" fill="#38a070" stroke="#101018"/><path d="M6 6 L8.5 3 H15 L12 6 M15 3 V10.5 L12 13.5" fill="#e8f0f8" stroke="#101018"/></g>
<line x1="28" y1="337.5" x2="48" y2="337.5" stroke="#b0aeb0" stroke-width="1" />
<g transform="translate(29.20,343.20) scale(1.100)"><path d="M4 6 H11 V14.5 H4Z" fill="#7898d0" stroke="#101018" stroke-width="1.2"/><path d="M4 6 L7 3 H14 L11 6 M14 3 V11.5 L11 14.5" fill="#c0d4ec" stroke="#101018"/><path d="M1.5 5 V14.5" stroke="#101018" stroke-width="1.5"/><path d="M1 3 C1 0 5 0 6 1.5" fill="none" stroke="#2050a8" stroke-width="1.3"/></g>
<g transform="translate(29.20,366.20) scale(1.100)"><rect x="1" y="2" width="3" height="3" fill="#2050c0"/><rect x="1" y="6.5" width="3" height="3" fill="#30b050"/><rect x="1" y="11" width="3" height="3" fill="#e04040"/><path d="M6 6 H12 V13.5 H6Z M6 6 L8.5 3 H15 L12 6 M15 3 V10.5 L12 13.5" fill="#e8f0f8" stroke="#101018"/><path d="M12 6 V13.5" stroke="#e02020" stroke-width="1.6"/></g>
<line x1="28" y1="387.5" x2="48" y2="387.5" stroke="#b0aeb0" stroke-width="1" />
<g transform="translate(28.76,392.76) scale(1.155)"><path d="M2 5.5 H11 V14.5 H2Z" fill="#6890d0" stroke="#182848"/><path d="M2 5.5 L5.5 2 H14.5 L11 5.5Z" fill="#a8c4ec" stroke="#182848"/><path d="M11 5.5 L14.5 2 V11 L11 14.5Z" fill="#88a8dc" stroke="#182848"/><circle cx="6.5" cy="10" r="2.6" fill="none" stroke="#182848" stroke-width="1.2"/></g>
<g transform="translate(29.20,415.20) scale(1.100)"><path d="M1 5 L5 1.5 H15 V11 L11 15 H1Z" fill="#a8b8d0" stroke="#7080a0" stroke-width=".7"/><path d="M8 1 V6" stroke="#a06020" stroke-width="1.6"/><path d="M5 14.5 L7 6 H9.5 L12 14.5Z" fill="#e8a020" stroke="#b05010" stroke-width=".8"/><path d="M5.5 12 H11.5" stroke="#c03010" stroke-width="1.2"/></g>
<g transform="translate(29.20,437.20) scale(1.100)"><path d="M1.5 5 L5 3 V12 L1.5 14Z M11 5 L14.5 3 V12 L11 14Z" fill="#88a8dc" stroke="#182848" stroke-width="1.2"/><path d="M8 1 V16" stroke="#101018" stroke-width="1.2" stroke-dasharray="2.5 1.5"/></g>
<g transform="translate(28.76,458.76) scale(1.155)"><path d="M2 5.5 H11 V14.5 H2Z" fill="#88a8dc" stroke="#182848"/><path d="M2 5.5 L5.5 2 H14.5 L11 5.5Z" fill="#c0d4ec" stroke="#182848"/><path d="M11 5.5 L14.5 2 V11 L11 14.5Z" fill="#6888c0" stroke="#182848"/><rect x="4" y="7.5" width="5" height="5" fill="#dce8f8" stroke="#182848" stroke-width=".9"/></g>
<g transform="translate(29.20,480.20) scale(1.100)"><path d="M6 5 H12 V11.5 H6Z M6 5 L8.5 2 H15 L12 5 M15 2 V8.5 L12 11.5" fill="#d8e8f4" stroke="#305070" stroke-width="1"/><path d="M1 10.5 L4 14 L10 7.5" fill="none" stroke="#189030" stroke-width="2.4"/></g>
<rect x="52" y="76.5" width="24.5" height="298.5" fill="#e8f0ee" />
<rect x="52" y="76.5" width="24.5" height="11" fill="#f0e6d8" />
<line x1="54" y1="80.0" x2="74.5" y2="80.0" stroke="#a8a6b0" stroke-width="1" />
<line x1="54" y1="81.0" x2="74.5" y2="81.0" stroke="#f8f8f4" stroke-width="1" />
<line x1="54" y1="84.0" x2="74.5" y2="84.0" stroke="#a8a6b0" stroke-width="1" />
<line x1="54" y1="85.0" x2="74.5" y2="85.0" stroke="#f8f8f4" stroke-width="1" />
<line x1="77.0" y1="76.5" x2="77.0" y2="375" stroke="#c8c0b8" stroke-width="1" />
<line x1="52" y1="375.5" x2="77.5" y2="375.5" stroke="#c8c0b8" stroke-width="1" />
<g transform="translate(54.76,88.26) scale(1.155)"><path d="M2 1.5 H10 L13 4.5 V14.5 H2Z" fill="#f4f8fc" stroke="#4a5a9a"/><circle cx="7" cy="6" r="3.2" fill="#dce8f4" stroke="#606880" stroke-width="1.2"/><path d="M5 8.5 L1.5 12" stroke="#b06838" stroke-width="1.8"/><rect x="6" y="9" width="9" height="6" fill="#dce8f8" stroke="#3858a0" stroke-width="1.2"/><path d="M6 10 H15" stroke="#3858a0" stroke-width="1.8"/></g>
<line x1="55" y1="111.5" x2="74" y2="111.5" stroke="#b0aeb0" stroke-width="1" />
<g transform="translate(54.32,116.32) scale(1.210)"><path d="M2 5.5 H11 V14.5 H2Z M2 5.5 L5.5 2 H14.5 L11 5.5 M14.5 2 V11 L11 14.5" fill="#d8e6f6" stroke="#405898" stroke-width=".95"/><path d="M5.5 2 V11 H14.5 M5.5 11 L2 14.5" fill="none" stroke="#7890c0" stroke-width=".7"/><path d="M2 5.5 L5.5 2 H14.5 L11 5.5Z" fill="#3c5ca8" stroke="#304a88" stroke-width=".8"/></g>
<g transform="translate(54.32,137.82) scale(1.210)"><path d="M2 5.5 H11 V14.5 H2Z M2 5.5 L5.5 2 H14.5 L11 5.5 M14.5 2 V11 L11 14.5" fill="#d8e6f6" stroke="#405898" stroke-width=".95"/><path d="M5.5 2 V11 H14.5 M5.5 11 L2 14.5" fill="none" stroke="#7890c0" stroke-width=".7"/><path d="M2 14.5 L5.5 11 H14.5 L11 14.5Z" fill="#3c5ca8" stroke="#304a88" stroke-width=".8"/></g>
<g transform="translate(54.32,160.32) scale(1.210)"><path d="M2 5.5 H11 V14.5 H2Z M2 5.5 L5.5 2 H14.5 L11 5.5 M14.5 2 V11 L11 14.5" fill="#d8e6f6" stroke="#405898" stroke-width=".95"/><path d="M5.5 2 V11 H14.5 M5.5 11 L2 14.5" fill="none" stroke="#7890c0" stroke-width=".7"/><path d="M2 5.5 L5.5 2 V11 L2 14.5Z" fill="#3c5ca8" stroke="#304a88" stroke-width=".8"/></g>
<g transform="translate(54.32,181.32) scale(1.210)"><path d="M2 5.5 H11 V14.5 H2Z M2 5.5 L5.5 2 H14.5 L11 5.5 M14.5 2 V11 L11 14.5" fill="#d8e6f6" stroke="#405898" stroke-width=".95"/><path d="M5.5 2 V11 H14.5 M5.5 11 L2 14.5" fill="none" stroke="#7890c0" stroke-width=".7"/><path d="M11 5.5 L14.5 2 V11 L11 14.5Z" fill="#3c5ca8" stroke="#304a88" stroke-width=".8"/></g>
<g transform="translate(54.32,204.32) scale(1.210)"><path d="M2 5.5 H11 V14.5 H2Z M2 5.5 L5.5 2 H14.5 L11 5.5 M14.5 2 V11 L11 14.5" fill="#d8e6f6" stroke="#405898" stroke-width=".95"/><path d="M5.5 2 V11 H14.5 M5.5 11 L2 14.5" fill="none" stroke="#7890c0" stroke-width=".7"/><path d="M2 5.5 H11 V14.5 H2Z" fill="#3c5ca8" stroke="#304a88" stroke-width=".8"/></g>
<g transform="translate(54.32,226.32) scale(1.210)"><path d="M2 5.5 H11 V14.5 H2Z M2 5.5 L5.5 2 H14.5 L11 5.5 M14.5 2 V11 L11 14.5" fill="#d8e6f6" stroke="#405898" stroke-width=".95"/><path d="M5.5 2 V11 H14.5 M5.5 11 L2 14.5" fill="none" stroke="#7890c0" stroke-width=".7"/><path d="M5.5 2 H14.5 V11 H5.5Z" fill="#3c5ca8" stroke="#304a88" stroke-width=".8"/><path d="M2 5.5 H11 V14.5 H2Z" fill="#dce8f6" opacity=".8" stroke="#304a88" stroke-width=".9"/></g>
<line x1="55" y1="249.5" x2="74" y2="249.5" stroke="#b0aeb0" stroke-width="1" />
<g transform="translate(54.76,254.76) scale(1.155)"><path d="M8 1.5 L14 5.5 V10.5 L8 14.5 L2 10.5 V5.5Z" fill="#e4eef8" stroke="#304a88" stroke-width="1.1"/><path d="M2 5.5 L8 9 L14 5.5 M8 9 V14.5" fill="none" stroke="#304a88" stroke-width=".9"/><path d="M2 5.5 L8 9 V14.5 L2 10.5Z" fill="#3c5ca8"/></g>
<g transform="translate(54.76,276.76) scale(1.155)"><path d="M8 1.5 L14 5.5 V10.5 L8 14.5 L2 10.5 V5.5Z" fill="#e4eef8" stroke="#304a88" stroke-width="1.1"/><path d="M2 5.5 L8 9 L14 5.5 M8 9 V14.5" fill="none" stroke="#304a88" stroke-width=".9"/><path d="M14 5.5 L8 9 V14.5 L14 10.5Z" fill="#3c5ca8"/></g>
<g transform="translate(54.76,298.26) scale(1.155)"><path d="M8 1.5 L14 5.5 V10.5 L8 14.5 L2 10.5 V5.5Z" fill="#e4eef8" stroke="#304a88" stroke-width="1.1"/><path d="M2 10.5 L8 7 L14 10.5 M8 7 V1.5" fill="none" stroke="#304a88" stroke-width=".9"/><path d="M8 1.5 L14 5.5 V10.5 L8 7Z" fill="#3c5ca8"/></g>
<g transform="translate(54.76,320.26) scale(1.155)"><path d="M8 1.5 L14 5.5 V10.5 L8 14.5 L2 10.5 V5.5Z" fill="#e4eef8" stroke="#304a88" stroke-width="1.1"/><path d="M2 10.5 L8 7 L14 10.5 M8 7 V1.5" fill="none" stroke="#304a88" stroke-width=".9"/><path d="M8 1.5 L2 5.5 V10.5 L8 7Z" fill="#3c5ca8"/></g>
<line x1="55" y1="343.5" x2="74" y2="343.5" stroke="#b0aeb0" stroke-width="1" />
<g transform="translate(54.76,349.76) scale(1.155)"><path d="M1 6 L3 4.5 V14 H1Z" fill="#303038"/><rect x="3" y="5.5" width="5" height="8.5" fill="#70707c" stroke="#282830" stroke-width=".8"/><rect x="4" y="3" width="3.5" height="2.5" fill="#383840"/><circle cx="10.5" cy="9.5" r="4" fill="#c8ccd4" stroke="#202028" stroke-width="1.5"/><circle cx="11" cy="9.5" r="1.8" fill="#f0f4f8" stroke="#404048" stroke-width=".8"/></g>
<rect x="52" y="376.5" width="24.5" height="140.0" fill="#e8f0ee" />
<rect x="52" y="376.5" width="24.5" height="11" fill="#f0e6d8" />
<line x1="54" y1="380.0" x2="74.5" y2="380.0" stroke="#a8a6b0" stroke-width="1" />
<line x1="54" y1="381.0" x2="74.5" y2="381.0" stroke="#f8f8f4" stroke-width="1" />
<line x1="54" y1="384.0" x2="74.5" y2="384.0" stroke="#a8a6b0" stroke-width="1" />
<line x1="54" y1="385.0" x2="74.5" y2="385.0" stroke="#f8f8f4" stroke-width="1" />
<line x1="77.0" y1="376.5" x2="77.0" y2="516.5" stroke="#c8c0b8" stroke-width="1" />
<line x1="52" y1="517.0" x2="77.5" y2="517.0" stroke="#c8c0b8" stroke-width="1" />
<g transform="translate(54.76,388.76) scale(1.155)"><rect x="1.5" y="1.5" width="12" height="9" fill="none" stroke="#101018" stroke-width="1.3"/><path d="M9.5 3 L4.5 14.5 H14.5Z" fill="none" stroke="#101018" stroke-width="1.3"/></g>
<g transform="translate(54.76,410.76) scale(1.155)"><path d="M1.5 4 H6.5 V9 H1.5Z M1.5 4 L4 1.5 H9 L6.5 4 M9 1.5 V6.5 L6.5 9 M4 1.5 V6.5 H9 M4 6.5 L1.5 9" fill="none" stroke="#101018" stroke-width="1"/><path d="M11.5 5.5 L7.5 13.5 A4 1.5 0 0 0 15.5 13.5Z" fill="none" stroke="#101018" stroke-width="1.1"/></g>
<g transform="translate(54.76,432.76) scale(1.155)"><path d="M2 5.5 L9 2 L14.5 4.5 V11 L8 15 L2 12Z M2 5.5 L8 8 L14.5 4.5 M8 8 V15" fill="#f4f8f8" stroke="#101018" stroke-width="1.2"/></g>
<g transform="translate(54.32,454.32) scale(1.210)"><path d="M1.5 5 L8.5 2 L14.5 4.5 L8 8Z" fill="#58a8f0"/><path d="M1.5 5 L8 8 V15 L1.5 11.5Z" fill="#3c88e0"/><path d="M8 8 L14.5 4.5 V11 L8 15Z" fill="#2c70c8"/></g>
<ellipse cx="64" cy="494" rx="6" ry="1.6" fill="#a8a8a0"/><circle cx="64" cy="485" r="7" fill="#2c5ca8"/><circle cx="62" cy="482.5" r="3" fill="#88b0e0"/>
<g transform="translate(55.14,499.64) scale(1.045)"><path d="M2 5 L8.5 2 L14.5 4.5 L8 8Z" fill="#a8d8f8" stroke="#182848"/><path d="M2 5 L8 8 V15 L2 11.5Z" fill="#6898e0" stroke="#182848"/><path d="M8 8 L14.5 4.5 V11 L8 15Z" fill="#4878c8" stroke="#182848"/></g>
<rect x="746" y="76" width="24" height="420" fill="#e8f0ee" />
<rect x="746" y="76" width="24" height="11" fill="#f0e6d8" />
<line x1="748" y1="79.5" x2="768" y2="79.5" stroke="#a8a6b0" stroke-width="1" />
<line x1="748" y1="80.5" x2="768" y2="80.5" stroke="#f8f8f4" stroke-width="1" />
<line x1="748" y1="83.5" x2="768" y2="83.5" stroke="#a8a6b0" stroke-width="1" />
<line x1="748" y1="84.5" x2="768" y2="84.5" stroke="#f8f8f4" stroke-width="1" />
<line x1="770.5" y1="76" x2="770.5" y2="496" stroke="#c8c0b8" stroke-width="1" />
<line x1="746" y1="496.5" x2="771" y2="496.5" stroke="#c8c0b8" stroke-width="1" />
<g transform="translate(749.20,89.20) scale(1.100)"><path d="M1 1 V15.5 M15 1 V15.5" stroke="#101010" stroke-width="1.4"/><path d="M1 4.5 H15" stroke="#101010" stroke-width="1.3"/><path d="M1 4.5 l3 -1.8 v3.6Z M15 4.5 l-3 -1.8 v3.6Z" fill="#101010"/></g>
<g transform="translate(750.08,112.08) scale(0.990)"><g transform="rotate(42 8 8)"><path d="M-1 4 V10 M17 4 V10" stroke="#101010" stroke-width="1.5"/><path d="M-1 7 H17" stroke="#101010" stroke-width="1.3"/><path d="M-1 7 l3 -1.8 v3.6Z M17 7 l-3 -1.8 v3.6Z" fill="#101010"/></g></g>
<g transform="translate(749.20,133.70) scale(1.100)"><path d="M6 3 V14.5 H15 M6 14.5 L11 7 V14.5 M11 7 H15" fill="none" stroke="#101010" stroke-width="1.2"/></g>
<text x="748.5" y="142" font-size="7" fill="#1c3c90" class="sa" font-weight="bold">Y</text>
<text x="763" y="138.5" font-size="7" fill="#1c3c90" class="sa" font-weight="bold">X</text>
<text x="748.5" y="138" font-size="6" fill="#1c3c90" class="sa" font-weight="bold">0</text>
<text x="748.5" y="150.5" font-size="6" fill="#1c3c90" class="sa" font-weight="bold">0</text>
<line x1="748" y1="155.5" x2="768" y2="155.5" stroke="#b0aeb0" stroke-width="1" />
<g transform="translate(750.26,162.26) scale(0.968)"><circle cx="8" cy="8" r="7" fill="none" stroke="#686058" stroke-width="1.4"/><path d="M8 8 L3.5 3.5" stroke="#101010" stroke-width="1.3"/><path d="M3 3 l4 1 l-3 3Z" fill="#101010"/></g>
<g transform="translate(750.26,183.26) scale(0.968)"><circle cx="8" cy="8" r="7" fill="none" stroke="#686058" stroke-width="1.4"/><path d="M3.5 3.5 L12.5 12.5" stroke="#101010" stroke-width="1.3"/><path d="M3 3 l4 1 l-3 3Z M13 13 l-4 -1 l3 -3Z" fill="#101010"/></g>
<g transform="translate(749.64,205.64) scale(1.045)"><path d="M8.5 1 L.5 14.5 H15.5" fill="none" stroke="#101010" stroke-width="1.4"/><path d="M7.2 3.6 A12.5 12.5 0 0 1 13.3 13" fill="none" stroke="#101010" stroke-width="1"/><path d="M6.6 3.2 l3.8 .3 l-1.6 2.6Z M13.6 14.3 l-2 -3.2 l3.2 -.2Z" fill="#101010"/></g>
<line x1="748" y1="227.5" x2="768" y2="227.5" stroke="#b0aeb0" stroke-width="1" />
<g transform="translate(748.76,231.76) scale(1.155)"><path d="M1 1 V15 M15 1 V15 M1 4 H15" stroke="#101010" stroke-width="1.3"/><path d="M5 1 L13 6 L9.5 7.5 L13 15 L6 8.5 L9 7Z" fill="#f0c820" stroke="#907010" stroke-width=".6"/></g>
<g transform="translate(749.20,255.20) scale(1.100)"><path d="M1 1 V15.5 M10 1 V15.5" stroke="#101010" stroke-width="1.3"/><path d="M1 4.5 H15.5" stroke="#101010" stroke-width="1.3"/><path d="M1 4.5 l3 -1.8 v3.6Z M15.5 4.5 l-3 -1.8 v3.6Z" fill="#101010"/><path d="M1 11 H10" stroke="#101010" stroke-width="1.3"/><path d="M1 11 l3 -1.8 v3.6Z M10 11 l-3 -1.8 v3.6Z" fill="#101010"/></g>
<g transform="translate(749.20,276.20) scale(1.100)"><path d="M1 1 V15.5 M8 1 V15.5 M15 1 V15.5" stroke="#101010" stroke-width="1.3"/><path d="M1 7 H8" stroke="#101010" stroke-width="1.3"/><path d="M1 7 l3 -1.8 v3.6Z M8 7 l-3 -1.8 v3.6Z" fill="#101010"/><path d="M8 7 H15" stroke="#101010" stroke-width="1.3"/><path d="M8 7 l3 -1.8 v3.6Z M15 7 l-3 -1.8 v3.6Z" fill="#101010"/></g>
<line x1="748" y1="299.5" x2="768" y2="299.5" stroke="#b0aeb0" stroke-width="1" />
<g transform="translate(748.76,305.76) scale(1.155)"><path d="M7 2 L13 6 L10 7.5 L14 15 L7.5 8.5 L10 7Z" fill="#f0c820" stroke="#806010" stroke-width=".7"/><path d="M8 5 L2 8.5" stroke="#101010" stroke-width="1.3"/><path d="M.5 9.5 l4 -.5 l-1.5 -2.5Z" fill="#101010"/></g>
<text x="765" y="311" font-size="8" fill="#1c3c90" class="sa" font-weight="bold">A</text>
<rect x="750.5" y="329.5" width="15" height="12" fill="#e0e8f4" stroke="#284890" stroke-width="1.2"/>
<rect x="751" y="330" width="7.5" height="11" fill="#3c64b0" />
<circle cx="754.8" cy="335.5" r="2.2" fill="none" stroke="#fff" stroke-width="1"/>
<path d="M754.8 331.5 V339.5 M751.5 335.5 H758" fill="none" stroke="#fff" stroke-width="0.9" />
<text x="759.5" y="340" font-size="8.5" fill="#183070" class="sa" font-weight="bold">.1</text>
<circle cx="758" cy="357.5" r="7.5" fill="none" stroke="#585048" stroke-width="1.3"/>
<path d="M755 357.5 H761 M758 354.5 V360.5" fill="none" stroke="#101010" stroke-width="1.6" />
<line x1="748" y1="371.5" x2="768" y2="371.5" stroke="#b0aeb0" stroke-width="1" />
<g transform="translate(750.08,378.08) scale(0.990)"><path d="M4 2.5 L2 13.5 M14.5 2.5 L12.5 13.5 M3.3 6.5 H13.8" fill="none" stroke="#101010" stroke-width="1"/><path d="M3.3 6.5 l2.6 -1.4 v2.8Z M13.8 6.5 l-2.6 -1.4 v2.8Z" fill="#101010"/></g>
<path d="M750.5 408.3 V416.3 M765.5 408.3 V416.3 M750.5 412.3 H765.5" fill="none" stroke="#101010" stroke-width="1.2" />
<path d="M750.5 412.3 l3 -1.8 v3.6Z M765.5 412.3 l-3 -1.8 v3.6Z" fill="#101010" stroke="none" stroke-width="1" />
<text x="752" y="408.5" font-size="13" fill="#1c3c90" class="sa" font-weight="bold" textLength="12" lengthAdjust="spacingAndGlyphs">A</text>
<path d="M750.5 430.7 V438.7 M765.5 430.7 V438.7 M750.5 434.7 H765.5" fill="none" stroke="#101010" stroke-width="1.2" />
<path d="M750.5 434.7 l3 -1.8 v3.6Z M765.5 434.7 l-3 -1.8 v3.6Z" fill="#101010" stroke="none" stroke-width="1" />
<path d="M754.5 431.5 L761.5 421.5 L764 423.3 L757 433 L753.5 434.5Z" fill="#e8a040" stroke="#a05820" stroke-width="0.7" />
<path d="M761.5 421.5 L762.6 420 L765 421.8 L764 423.3Z" fill="#d05060" stroke="none" stroke-width="1" />
<path d="M752 444.8 V451.2 M765.5 444.8 V451.2 M752 448 H765.5" fill="none" stroke="#2858b0" stroke-width="1.1" />
<path d="M752 448 l3 -1.8 v3.6Z M765.5 448 l-3 -1.8 v3.6Z" fill="#2858b0" stroke="none" stroke-width="1" />
<path d="M750.5 450.8 V458.8 M763.5 450.8 V458.8 M750.5 454.8 H763.5" fill="none" stroke="#101010" stroke-width="1.2" />
<path d="M750.5 454.8 l3 -1.8 v3.6Z M763.5 454.8 l-3 -1.8 v3.6Z" fill="#101010" stroke="none" stroke-width="1" />
<line x1="765.5" y1="448" x2="765.5" y2="459" stroke="#2858b0" stroke-width="1.1" />
<line x1="748" y1="465.5" x2="768" y2="465.5" stroke="#b0aeb0" stroke-width="1" />
<path d="M750.5 480.8 V488.8 M765.5 480.8 V488.8 M750.5 484.8 H765.5" fill="none" stroke="#101010" stroke-width="1.2" />
<path d="M750.5 484.8 l3 -1.8 v3.6Z M765.5 484.8 l-3 -1.8 v3.6Z" fill="#101010" stroke="none" stroke-width="1" />
<path d="M753 483.5 L759 478 L761 480 L756 484Z" fill="#202028" stroke="none" stroke-width="1" />
<path d="M759 478 L764.5 471 L766 472.3 L761 480Z" fill="#d88040" stroke="none" stroke-width="1" />
<rect x="746" y="498" width="24" height="18" fill="#e8f0ee" />
<rect x="746" y="498" width="24" height="11" fill="#f0e6d8" />
<line x1="748" y1="501.5" x2="768" y2="501.5" stroke="#a8a6b0" stroke-width="1" />
<line x1="748" y1="502.5" x2="768" y2="502.5" stroke="#f8f8f4" stroke-width="1" />
<line x1="748" y1="505.5" x2="768" y2="505.5" stroke="#a8a6b0" stroke-width="1" />
<line x1="748" y1="506.5" x2="768" y2="506.5" stroke="#f8f8f4" stroke-width="1" />
<line x1="770.5" y1="498" x2="770.5" y2="516" stroke="#c8c0b8" stroke-width="1" />
<line x1="746" y1="516.5" x2="771" y2="516.5" stroke="#c8c0b8" stroke-width="1" />
<circle cx="758" cy="515" r="1.5" fill="#101010"/>
<rect x="772.5" y="76" width="23.5" height="279" fill="#e8f0ee" />
<rect x="772.5" y="76" width="23.5" height="11" fill="#f0e6d8" />
<line x1="774.5" y1="79.5" x2="794.0" y2="79.5" stroke="#a8a6b0" stroke-width="1" />
<line x1="774.5" y1="80.5" x2="794.0" y2="80.5" stroke="#f8f8f4" stroke-width="1" />
<line x1="774.5" y1="83.5" x2="794.0" y2="83.5" stroke="#a8a6b0" stroke-width="1" />
<line x1="774.5" y1="84.5" x2="794.0" y2="84.5" stroke="#f8f8f4" stroke-width="1" />
<line x1="796.5" y1="76" x2="796.5" y2="355" stroke="#c8c0b8" stroke-width="1" />
<line x1="772.5" y1="355.5" x2="797.0" y2="355.5" stroke="#c8c0b8" stroke-width="1" />
<g transform="translate(776.90,89.90) scale(1.012)"><path d="M2 1.5 H8 V7 H2Z M2 9 H8 V15 H2Z" fill="#e4ecf4" stroke="#101010" stroke-width="1.2"/><path d="M8 1.5 L14.5 7 H8 M8 9 L14.5 15 H8" fill="#f4f0f0" stroke="#c01818" stroke-width="1.1"/><path d="M2 8 H9" stroke="#808080" stroke-width="1.6"/></g>
<g transform="translate(776.64,111.64) scale(1.045)"><path d="M4.5 1.5 L8 5 L4.5 8.5 L1 5Z" fill="none" stroke="#c01818" stroke-width="1.3" stroke-dasharray="2 1"/><path d="M7 9 L10.5 5.5 L14 9" fill="none" stroke="#101010" stroke-width="1.1"/><rect x="10" y="10" width="4.5" height="4.5" fill="#fff" stroke="#101010" stroke-width="1.2"/><path d="M10 2 L14 5 M12 1.5 L10 2 L10.6 4" fill="none" stroke="#101010" stroke-width="1"/></g>
<g transform="translate(776.64,133.64) scale(1.045)"><path d="M2 3 L13 9 H2Z" fill="#f8f8f8" stroke="#101010" stroke-width="1.3"/><path d="M1 8 H15 M7 1 V15" stroke="#101010" stroke-width="1.3"/><path d="M9 2.5 L7 5 M5 14 L7 11" stroke="#101010" stroke-width="1"/><circle cx="9.5" cy="7" r="1" fill="#c01818"/></g>
<g transform="translate(776.90,155.90) scale(1.012)"><path d="M6 1.5 L2 14.5 M13 1.5 L9 14.5" stroke="#101010" stroke-width="1.4"/><path d="M0 7 H16" stroke="#101010" stroke-width="1.1" stroke-dasharray="4 2"/><path d="M5 7 H10" stroke="#c01818" stroke-width="1.6" stroke-dasharray="1.6 1.4"/></g>
<g transform="translate(776.90,177.90) scale(1.012)"><circle cx="4" cy="4" r="2.6" fill="none" stroke="#101010" stroke-width="1.2"/><path d="M1.5 9 C1.5 6.5 7 6.5 7 9 V14.5 H14.5" fill="none" stroke="#101010" stroke-width="1.3"/><path d="M8 9 L13 2 L15 3.5 L10 10.5 L7.5 11.5Z" fill="#f0e020" stroke="#a030a0" stroke-width=".9"/><path d="M2 14.5 H6" stroke="#c01818" stroke-width="1.4"/></g>
<text x="776.5" y="205" font-size="6.5" fill="#101010" class="sa" font-weight="bold" textLength="16.5" lengthAdjust="spacingAndGlyphs">ABCD</text>
<path d="M780 209 H791 L788 213 H777Z" fill="#f4f4f4" stroke="#707070" stroke-width="0.9" />
<line x1="777" y1="208.5" x2="793" y2="208.5" stroke="#101010" stroke-width="1" />
<rect x="778" y="224" width="14" height="8" fill="#c0c0b0" />
<path d="M779 227 L783 231 L787 226 L791 230" fill="none" stroke="#c02020" stroke-width="1.3" />
<path d="M778 231.5 H792 M781 224 V236 M789 224 V236" fill="none" stroke="#101010" stroke-width="1" />
<rect x="778" y="243" width="14" height="15" fill="#f4f4f8" />
<path d="M778 244 L781 250 L784 245 L787 252 L790 244 L792 248 V252 H778Z" fill="#d02030" stroke="none" stroke-width="1" />
<path d="M778 251 L782 254 L786 250 L792 253 V256 H778Z" fill="#2858d0" stroke="none" stroke-width="1" />
<path d="M782 258 L785 253 L788 258Z" fill="#209040" stroke="none" stroke-width="1" />
<circle cx="782.5" cy="270.5" r="5.5" fill="#2a9a58"/><path d="M779 268 L783 266 L785 270 L781 273Z" fill="#2868c8"/><circle cx="788" cy="276" r="4" fill="#e8f0f8" stroke="#606870" stroke-width="1.2"/>
<path d="M785 279 L781.5 283" fill="none" stroke="#304878" stroke-width="1.8" />
<path d="M777 296.5 H782 L784 292.5 L786.5 300.5 L788.5 296.5 H793.5" fill="none" stroke="#101010" stroke-width="0.95" />
<rect x="777" y="310" width="16" height="15" fill="#c0c0b0" />
<path d="M786 310 L781 318 H785 L782 325 L791 315.5 H787 L790.5 310Z" fill="#f8e820" stroke="#807010" stroke-width="0.6" />
<path d="M778.5 311 V323.5 H792" fill="none" stroke="#101010" stroke-width="1" stroke-dasharray="2.5 1.5"/>
<rect x="776.5" y="321.5" width="3" height="3" fill="#fff" stroke="#101010" stroke-width=".8"/>
<circle cx="779.5" cy="334.5" r="3" fill="none" stroke="#101010" stroke-width="1.1"/><circle cx="788" cy="342.5" r="3.8" fill="none" stroke="#101010" stroke-width="1.1"/>
<path d="M784 333 L789.5 337 M787 337.5 H790 V334.8" fill="none" stroke="#101010" stroke-width="1" />
<text x="776" y="347.5" font-size="8" fill="#101010" class="sa" >M</text>
<path d="M784.5 346 A4 4 0 0 0 791.5 345" fill="none" stroke="#101010" stroke-width="0.95" />
<rect x="772.5" y="357" width="23.5" height="159" fill="#e8f0ee" />
<rect x="772.5" y="357" width="23.5" height="11" fill="#f0e6d8" />
<line x1="774.5" y1="360.5" x2="794.0" y2="360.5" stroke="#a8a6b0" stroke-width="1" />
<line x1="774.5" y1="361.5" x2="794.0" y2="361.5" stroke="#f8f8f4" stroke-width="1" />
<line x1="774.5" y1="364.5" x2="794.0" y2="364.5" stroke="#a8a6b0" stroke-width="1" />
<line x1="774.5" y1="365.5" x2="794.0" y2="365.5" stroke="#f8f8f4" stroke-width="1" />
<line x1="796.5" y1="357" x2="796.5" y2="516" stroke="#c8c0b8" stroke-width="1" />
<line x1="772.5" y1="516.5" x2="797.0" y2="516.5" stroke="#c8c0b8" stroke-width="1" />
<g transform="translate(777,373)"><path d="M1 14 L5.5 10 H15.5 L11 14Z" fill="#f4f4f4" stroke="#181818" stroke-width=".9"/><path d="M1 10.5 L5.5 6.5 H15.5 L11 10.5Z" fill="#f4f4f4" stroke="#181818" stroke-width=".9"/><path d="M1 7 L5.5 3 H15.5 L11 7Z" fill="#f0e020" stroke="#181818" stroke-width=".9"/><path d="M7 7 L12.5 -1 L14.5 .5 L9 8.5 L6.5 9Z" fill="#f0e020" stroke="#504010" stroke-width=".7"/><path d="M12.5 -1 L13.5 -2.5 L15.5 -1 L14.5 .5Z" fill="#e020c0"/></g>
<g transform="translate(775.76,390.76) scale(1.155)"><path d="M1 2 L4 5 L7 1 M1 6 H8 M1 8.5 H8" fill="none" stroke="#101010" stroke-width="1.1"/><circle cx="3.5" cy="12.5" r="2.8" fill="#f0e020" stroke="#807010" stroke-width=".8"/><circle cx="13" cy="3" r="2.2" fill="#fff" stroke="#101010" stroke-width="1"/><path d="M13 6 L9 10 M9 7.5 V10 H11.5 M8.5 12 H15 M10 13.5 H15 M12 10 V15" fill="none" stroke="#101010" stroke-width="1"/></g>
<g transform="translate(777,414)"><path d="M1 14 L5.5 10 H15.5 L11 14Z" fill="#f4f4f4" stroke="#181818" stroke-width=".9"/><path d="M1 10.5 L5.5 6.5 H15.5 L11 10.5Z" fill="#f4f4f4" stroke="#181818" stroke-width=".9"/><path d="M1 7 L5.5 3 H15.5 L11 7Z" fill="#f0e020" stroke="#181818" stroke-width=".9"/><circle cx="13.5" cy="1" r="2" fill="#fff" stroke="#101010"/><path d="M12 3 L8 6.5 M8 4 V6.5 H10.5" fill="none" stroke="#101010" stroke-width="1"/><path d="M1 -2 L3.5 .5 L6.5 -3" fill="none" stroke="#101010" stroke-width="1"/></g>
<g transform="translate(777,437)"><path d="M1 14 L5.5 10 H15.5 L11 14Z" fill="#f4f4f4" stroke="#181818" stroke-width=".9"/><path d="M1 10.5 L5.5 6.5 H15.5 L11 10.5Z" fill="#f4f4f4" stroke="#181818" stroke-width=".9"/><path d="M1 7 L5.5 3 H15.5 L11 7Z" fill="#f0e020" stroke="#181818" stroke-width=".9"/></g>
<g transform="translate(777,460)"><path d="M1 14 L5.5 10 H15.5 L11 14Z" fill="#f4f4f4" stroke="#181818" stroke-width=".9"/><path d="M1 10.5 L5.5 6.5 H15.5 L11 10.5Z" fill="#f4f4f4" stroke="#181818" stroke-width=".9"/><path d="M1 7 L5.5 3 H15.5 L11 7Z" fill="#f0e020" stroke="#181818" stroke-width=".9"/><path d="M5 4 L11 6 M11 6 L8 6.5 M11 6 L10 3" fill="none" stroke="#101010" stroke-width="1.8"/><circle cx="12.5" cy="1.5" r="2.6" fill="none" stroke="#101010" stroke-width="1.6"/></g>
<g transform="translate(775.76,481.76) scale(1.155)"><circle cx="4.5" cy="11" r="4.2" fill="#f0e020" stroke="#101010" stroke-width="1.3"/><circle cx="13" cy="4" r="3" fill="#fff" stroke="#101010" stroke-width="1.1"/><path d="M2 1 L6.5 5.5 M3.5 5.5 H6.5 V2.5 M10 11 H16 M11 13.5 H16 M13 8.5 V15" fill="none" stroke="#101010" stroke-width="1.1"/></g>
<rect x="777.5" y="503.5" width="15" height="14" fill="#b8c0b8" />
<path d="M780 507 V515 M783 505 V512" fill="none" stroke="#1c50a8" stroke-width="3" />
<path d="M787 506 L791 510 M788 511 L791 515" fill="none" stroke="#889088" stroke-width="1.4" />
<rect x="727" y="78" width="17" height="422" fill="#e6eeee" />
<rect x="729.5" y="78.5" width="13" height="15" rx="1.5" fill="#e8f0f0" stroke="#a4a8a8" stroke-width="1"/>
<rect x="730.2" y="84.72" width="11.6" height="2.56" fill="#c8d8e8" />
<rect x="730.2" y="86.96000000000001" width="11.6" height="5.84" fill="#dcc8cc" />
<path d="M732.5 87.5 L736.0 84.0 L739.5 87.5" fill="none" stroke="#30300c" stroke-width="2.2" />
<rect x="729.5" y="483.5" width="13" height="15" rx="1.5" fill="#e8f0f0" stroke="#a4a8a8" stroke-width="1"/>
<rect x="730.2" y="489.72" width="11.6" height="2.56" fill="#c8d8e8" />
<rect x="730.2" y="491.96" width="11.6" height="5.84" fill="#dcc8cc" />
<path d="M732.5 489.5 L736.0 493.0 L739.5 489.5" fill="none" stroke="#30300c" stroke-width="2.2" />
<rect x="728.5" y="280.5" width="14" height="15" rx="1.5" fill="#e8f0f0" stroke="#a4a8a8" stroke-width="1"/>
<rect x="729.2" y="286.72" width="12.6" height="2.56" fill="#c8d8e8" />
<rect x="729.2" y="288.96" width="12.6" height="5.84" fill="#dcc8cc" />
<rect x="78" y="499.5" width="666" height="14.5" fill="#efe6d6" />
<rect x="78" y="514.5" width="666" height="2.5" fill="#e6eeee" />
<rect x="80.5" y="500.5" width="18" height="13" fill="#efe6d6" stroke="#a8b4c4" stroke-width="1"/>
<rect x="98.5" y="500.5" width="18" height="13" fill="#efe6d6" stroke="#a8b4c4" stroke-width="1"/>
<rect x="116.5" y="500.5" width="18" height="13" fill="#efe6d6" stroke="#a8b4c4" stroke-width="1"/>
<rect x="134.5" y="500.5" width="18" height="13" fill="#efe6d6" stroke="#a8b4c4" stroke-width="1"/>
<path d="M85.5 502.5 V511.5" fill="none" stroke="#101010" stroke-width="1.8" />
<path d="M93 502.5 V511.5 L87 507Z" fill="#101010" stroke="none" stroke-width="1" />
<path d="M110 502.5 V511.5 L104 507Z" fill="#101010" stroke="none" stroke-width="1" />
<path d="M122 502.5 V511.5 L128 507Z" fill="#101010" stroke="none" stroke-width="1" />
<path d="M139 502.5 V511.5 L145 507Z" fill="#101010" stroke="none" stroke-width="1" />
<path d="M146.5 502.5 V511.5" fill="none" stroke="#101010" stroke-width="1.8" />
<path d="M156 499.5 L160 513.5 H191.5 L196 499.5Z" fill="#0a0a0a" stroke="none" stroke-width="1" />
<line x1="156" y1="499.5" x2="160" y2="513.5" stroke="#c8c8c8" stroke-width="1" />
<text x="163" y="510.5" font-size="12" fill="#fff" class="cj" font-weight="bold" textLength="24">模型</text>
<path d="M195.5 500 L199 512.8 H238 L241.5 500" fill="none" stroke="#101010" stroke-width="1.2" />
<text x="202" y="510.5" font-size="12" fill="#000" class="cj" textLength="28.5" lengthAdjust="spacingAndGlyphs">布局1</text>
<path d="M241.5 500 L244 512.8 H282 L286.5 500" fill="none" stroke="#101010" stroke-width="1.2" />
<text x="247.5" y="510.5" font-size="12" fill="#000" class="cj" textLength="28.5" lengthAdjust="spacingAndGlyphs">布局2</text>
<rect x="513" y="499.5" width="215" height="15" fill="#e6eeee" />
<rect x="507.7" y="500.3" width="4.3" height="12.2" rx="1" fill="#e8f0ee" stroke="#c8c4ac" stroke-width="1"/>
<rect x="513.5" y="500.0" width="14" height="13.5" rx="1.5" fill="#e8f0f0" stroke="#a4a8a8" stroke-width="1"/>
<rect x="514.2" y="505.59" width="12.6" height="2.32" fill="#c8d8e8" />
<rect x="514.2" y="507.62" width="12.6" height="5.18" fill="#dcc8cc" />
<path d="M522.0 503.25 L518.5 506.75 L522.0 510.25" fill="none" stroke="#30300c" stroke-width="2.2" />
<rect x="711.5" y="500.0" width="15" height="13.5" rx="1.5" fill="#e8f0f0" stroke="#a4a8a8" stroke-width="1"/>
<rect x="712.2" y="505.59" width="13.6" height="2.32" fill="#c8d8e8" />
<rect x="712.2" y="507.62" width="13.6" height="5.18" fill="#dcc8cc" />
<path d="M717.5 503.25 L721.0 506.75 L717.5 510.25" fill="none" stroke="#30300c" stroke-width="2.2" />
<rect x="613.0" y="500.0" width="14.5" height="13.5" rx="1.5" fill="#e8f0f0" stroke="#a4a8a8" stroke-width="1"/>
<rect x="613.7" y="505.59" width="13.1" height="2.32" fill="#c8d8e8" />
<rect x="613.7" y="507.62" width="13.1" height="5.18" fill="#dcc8cc" />
<rect x="0" y="517" width="800" height="4" fill="#efe6d6" />
<rect x="0" y="520.8" width="800" height="1.3" fill="#101010" />
<rect x="0" y="521.9" width="800" height="51.5" fill="#e8efee" />
<rect x="17" y="521.9" width="783" height="4.5" fill="#efe6d6" />
<line x1="9.0" y1="529" x2="9.0" y2="569" stroke="#a8a6b0" stroke-width="1" />
<line x1="10.0" y1="529" x2="10.0" y2="569" stroke="#f8f8f4" stroke-width="1" />
<line x1="12.5" y1="529" x2="12.5" y2="569" stroke="#a8a6b0" stroke-width="1" />
<line x1="13.5" y1="529" x2="13.5" y2="569" stroke="#f8f8f4" stroke-width="1" />
<rect x="17" y="526" width="772" height="46.5" fill="#e8f0ee" />
<rect x="17" y="526.3" width="772" height="1.3" fill="#101010" />
<rect x="17" y="526.3" width="1.5" height="46.2" fill="#101010" />
<line x1="18" y1="556.5" x2="789" y2="556.5" stroke="#909498" stroke-width="1" />
<rect x="789" y="522.4" width="11" height="52" fill="#efe6d6" />
<text x="19.5" y="538.5" font-size="12.5" fill="#000" class="cj" >命</text>
<text x="35" y="538.5" font-size="12.5" fill="#000" class="cj" >令</text>
<text x="51" y="538.5" font-size="13.33" fill="#000" class="mo" >: '_.zoom _e</text>
<text x="19.5" y="551.5" font-size="12.5" fill="#000" class="cj" >命</text>
<text x="35" y="551.5" font-size="12.5" fill="#000" class="cj" >令</text>
<text x="51" y="551.5" font-size="13.33" fill="#000" class="mo" >: '_.zoom _e</text>
<text x="19.5" y="569.5" font-size="12.5" fill="#000" class="cj" >命</text>
<text x="35" y="569.5" font-size="12.5" fill="#000" class="cj" >令</text>
<text x="51" y="569.5" font-size="13.33" fill="#000" class="mo" >:</text>
<rect x="775" y="528" width="14" height="28" fill="#e6eeee" />
<rect x="776.0" y="529.0" width="12" height="12" rx="1.5" fill="#e8f0f0" stroke="#a4a8a8" stroke-width="1"/>
<rect x="776.7" y="533.96" width="10.6" height="2.08" fill="#c8d8e8" />
<rect x="776.7" y="535.78" width="10.6" height="4.52" fill="#dcc8cc" />
<path d="M778.5 536.5 L782.0 533.0 L785.5 536.5" fill="none" stroke="#30300c" stroke-width="2.2" />
<rect x="776.0" y="543.0" width="12" height="12" rx="1.5" fill="#e8f0f0" stroke="#a4a8a8" stroke-width="1"/>
<rect x="776.7" y="547.96" width="10.6" height="2.08" fill="#c8d8e8" />
<rect x="776.7" y="549.78" width="10.6" height="4.52" fill="#dcc8cc" />
<path d="M778.5 547.5 L782.0 551.0 L785.5 547.5" fill="none" stroke="#30300c" stroke-width="2.2" />
<rect x="711" y="557.5" width="62" height="15" fill="#e6eeee" />
<rect x="711.5" y="558.0" width="15" height="13.5" rx="1.5" fill="#e8f0f0" stroke="#a4a8a8" stroke-width="1"/>
<rect x="712.2" y="563.59" width="13.6" height="2.32" fill="#c8d8e8" />
<rect x="712.2" y="565.62" width="13.6" height="5.18" fill="#dcc8cc" />
<path d="M720.5 561.25 L717.0 564.75 L720.5 568.25" fill="none" stroke="#30300c" stroke-width="2.2" />
<rect x="728.0" y="558.0" width="14" height="13.5" rx="1.5" fill="#e8f0f0" stroke="#a4a8a8" stroke-width="1"/>
<rect x="728.7" y="563.59" width="12.6" height="2.32" fill="#c8d8e8" />
<rect x="728.7" y="565.62" width="12.6" height="5.18" fill="#dcc8cc" />
<rect x="756.5" y="558.0" width="15" height="13.5" rx="1.5" fill="#e8f0f0" stroke="#a4a8a8" stroke-width="1"/>
<rect x="757.2" y="563.59" width="13.6" height="2.32" fill="#c8d8e8" />
<rect x="757.2" y="565.62" width="13.6" height="5.18" fill="#dcc8cc" />
<path d="M762.5 561.25 L766.0 564.75 L762.5 568.25" fill="none" stroke="#30300c" stroke-width="2.2" />
<rect x="0" y="573" width="800" height="2.5" fill="#f4f4f0" />
<line x1="0" y1="575" x2="800" y2="575" stroke="#b0b0b0" stroke-width="1" />
<rect x="0" y="575.5" width="800" height="22.5" fill="#e9e0d4" />
<rect x="0" y="578" width="800" height="11" fill="#c6d5e8" />
<rect x="0" y="589" width="800" height="3.5" fill="#efe6d0" />
<rect x="0" y="592.5" width="800" height="5" fill="#dccdd4" />
<rect x="0" y="598" width="800" height="2" fill="#101010" />
<rect x="0" y="576" width="26" height="22" fill="#ece8e4" />
<rect x="5.5" y="579.5" width="212" height="17" fill="none" stroke="#a8a8a8" stroke-width="1"/>
<text x="6.5" y="594" font-size="12" fill="#9098a0" class="mo" textLength="150" lengthAdjust="spacingAndGlyphs">432.2593, 15.7025, 0.0000</text>
<defs><linearGradient id="sg" x1="0" y1="0" x2="0" y2="1"><stop offset="0" stop-color="#fafafa"/><stop offset=".55" stop-color="#d6d6d6"/><stop offset="1" stop-color="#b4b4b4"/></linearGradient><linearGradient id="cg" x1="0" y1="0" x2="0" y2="1"><stop offset="0" stop-color="#d0d0d0"/><stop offset=".35" stop-color="#f6f6f6"/><stop offset="1" stop-color="#e0dcdc"/></linearGradient></defs>
<rect x="218" y="576" width="322" height="19" fill="url(#sg)" />
<rect x="218" y="594" width="322" height="3.5" fill="#d8c8cc" />
<rect x="225.5" y="577.5" width="125" height="15" rx="7.5" fill="url(#cg)" stroke="#989898" stroke-width=".9"/>
<line x1="238" y1="585" x2="346" y2="585" stroke="#8c8c84" stroke-width="1.2" />
<rect x="234" y="578" width="7" height="14.5" fill="#e0e0e0" stroke="#404040" stroke-width="1.2"/>
<line x1="237.5" y1="578" x2="237.5" y2="592.5" stroke="#404040" stroke-width="1" />
<rect x="360.5" y="577.5" width="164" height="15" rx="7.5" fill="url(#cg)" stroke="#989898" stroke-width=".9"/>
<path d="M377.5 580.5 V590.5" fill="none" stroke="#50485a" stroke-width="2" />
<path d="M387 580.5 V590.5 L379 585.5Z" fill="#50485a" stroke="none" stroke-width="1" />
<path d="M406 580.5 V590.5 L398.5 585.5Z M413.5 580.5 V590.5 L406 585.5Z" fill="#50485a" stroke="none" stroke-width="1" />
<path d="M426.5 580.5 V590.5 L435 585.5Z" fill="#50485a" stroke="none" stroke-width="1" />
<path d="M450.5 581 V590 M455.5 581 V590" fill="none" stroke="#50485a" stroke-width="2.4" />
<path d="M471 580.5 V590.5 L478.5 585.5Z M478.5 580.5 V590.5 L486 585.5Z" fill="#50485a" stroke="none" stroke-width="1" />
<path d="M497.5 580.5 V590.5 L505.5 585.5Z" fill="#50485a" stroke="none" stroke-width="1" />
<path d="M506.5 580.5 V590.5" fill="none" stroke="#50485a" stroke-width="2" />
<line x1="356" y1="596.5" x2="372" y2="596.5" stroke="#302830" stroke-width="1.2" stroke-dasharray="3 1.5"/>
<line x1="374" y1="596.5" x2="392" y2="596.5" stroke="#302830" stroke-width="1.2" stroke-dasharray="3 1.5"/>
<line x1="394" y1="596.5" x2="412" y2="596.5" stroke="#302830" stroke-width="1.2" stroke-dasharray="3 1.5"/>
<line x1="414" y1="596.5" x2="440" y2="596.5" stroke="#302830" stroke-width="1.2" stroke-dasharray="3 1.5"/>
<line x1="444" y1="596.5" x2="462" y2="596.5" stroke="#302830" stroke-width="1.2" stroke-dasharray="3 1.5"/>
<line x1="464" y1="596.5" x2="487" y2="596.5" stroke="#302830" stroke-width="1.2" stroke-dasharray="3 1.5"/>
<line x1="490" y1="596.5" x2="505" y2="596.5" stroke="#302830" stroke-width="1.2" stroke-dasharray="3 1.5"/>
<line x1="508" y1="596.5" x2="530" y2="596.5" stroke="#302830" stroke-width="1.2" stroke-dasharray="3 1.5"/>
<line x1="262" y1="593" x2="262" y2="597" stroke="#f4f4f4" stroke-width="1.5" />
<line x1="300" y1="593" x2="300" y2="597" stroke="#f4f4f4" stroke-width="1.5" />
<line x1="338" y1="593" x2="338" y2="597" stroke="#f4f4f4" stroke-width="1.5" />
<rect x="540.5" y="576.5" width="19" height="20.5" fill="#dcdcdc" stroke="#a0a0a0" stroke-width="1"/>
<text x="546.5" y="593" font-size="16" fill="#383040" class="se" >i</text>
<path d="M770 588.5 H779 L774.5 593.5Z" fill="#101010" stroke="none" stroke-width="1" />
<rect x="796" y="594" width="2" height="2" fill="#b0a8a0" />
<rect x="792" y="594" width="2" height="2" fill="#b0a8a0" />
<rect x="788" y="594" width="2" height="2" fill="#b0a8a0" />
<rect x="796" y="590" width="2" height="2" fill="#b0a8a0" />
<rect x="792" y="590" width="2" height="2" fill="#b0a8a0" />
<rect x="796" y="586" width="2" height="2" fill="#b0a8a0" />
</svg>
</body></html>
